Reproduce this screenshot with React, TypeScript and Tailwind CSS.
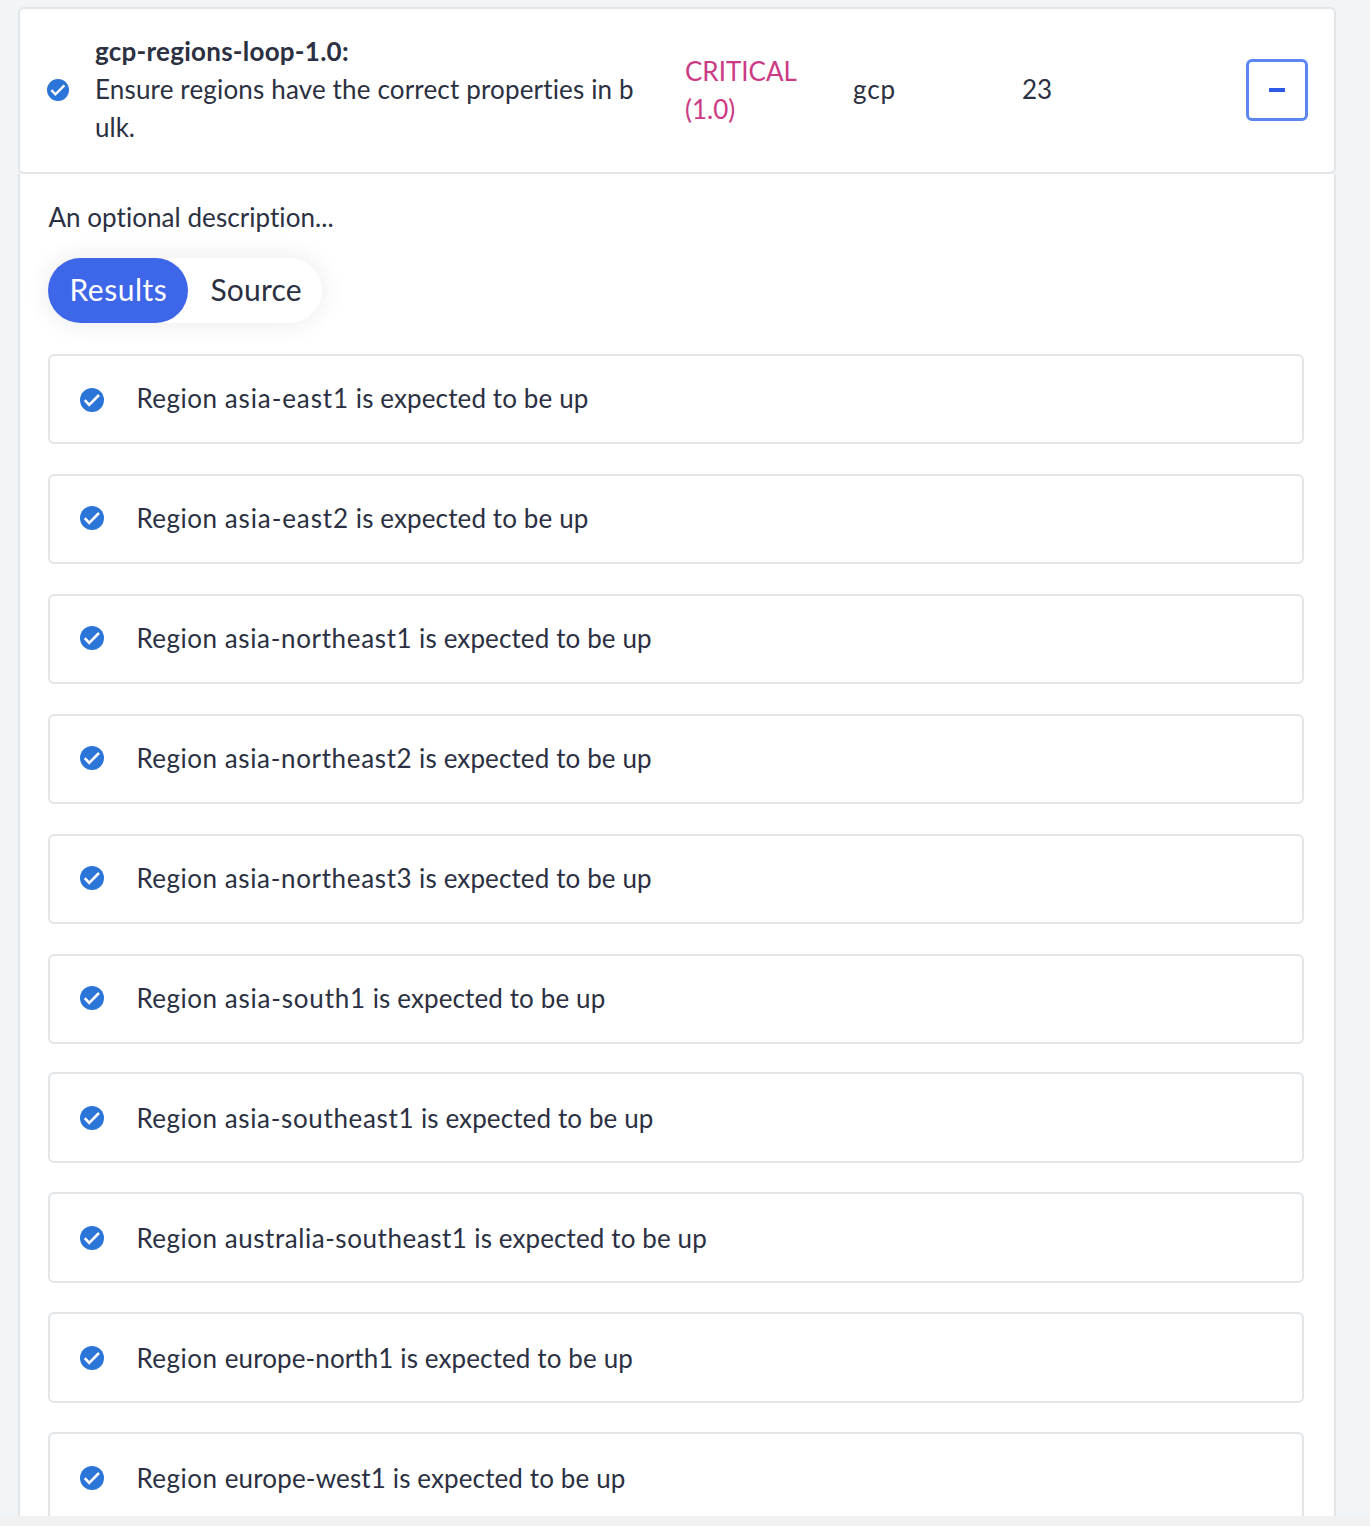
import React from "react";

const upper = { row: "h-[90px] mb-[30px]", icon: "mb-0.5", text: "mb-0.5" };
const lower = { row: "h-[91px] mb-[29px]", icon: "mt-px", text: "mt-px" };

const regions = [
  { name: "asia-east1", track: "tracking-[0.9px]", ...upper, icon: "mt-0.5" },
  { name: "asia-east2", track: "tracking-[0.9px]", ...upper },
  { name: "asia-northeast1", track: "tracking-[0.65px]", ...upper },
  { name: "asia-northeast2", track: "tracking-[0.65px]", ...upper },
  { name: "asia-northeast3", track: "tracking-[0.65px]", ...upper },
  { name: "asia-south1", track: "tracking-[0.8px]", ...upper, row: "h-[90px] mb-[28px]" },
  { name: "asia-southeast1", track: "tracking-[0.65px]", ...lower },
  { name: "australia-southeast1", track: "tracking-[0.55px]", ...lower },
  { name: "europe-north1", track: "tracking-[0.1px]", ...lower },
  { name: "europe-west1", track: "tracking-[0.15px]", ...lower },
];

function CheckBadge({ className }: { className: string }) {
  return (
    <svg viewBox="0 0 24 24" className={`shrink-0 ${className}`}>
      <circle cx="12" cy="12" r="12" fill="#2b74d8" />
      <path d="M4.8 12.2 9.2 16.8 19 7" fill="none" stroke="#fff" strokeWidth="2.6" />
    </svg>
  );
}

export default function App() {
  return (
    <div className="flex h-[1526px] w-[1370px] flex-col overflow-hidden bg-[#f1f5f8] font-['Lato',sans-serif] text-[26px] leading-[38px] text-[#2b3042] [font-variant-ligatures:none]">
      <div className="flex h-[1516px] shrink-0 flex-col overflow-hidden pt-[6.5px] pr-[34px] pl-[18px]">
        <header className="flex h-[167px] shrink-0 items-center rounded-[6px] border-2 border-[#e2e6e9] bg-white pr-[26px] pl-[26.5px]">
          <CheckBadge className="mb-px size-[22px]" />
          <div className="mb-0.5 ml-[26.5px] w-[590px] shrink-0 whitespace-nowrap">
            <div className="font-bold tracking-[0.25px]">gcp-regions-loop-1.0:</div>
            <div className="tracking-[0.16px]">Ensure regions have the correct properties in b</div>
            <div>ulk.</div>
          </div>
          <div className="mb-px w-[168px] shrink-0 text-[#cc3a85]">
            <div>CRITICAL</div>
            <div>(1.0)</div>
          </div>
          <div className="mb-0.5 w-[169px] shrink-0 tracking-[0.9px]">gcp</div>
          <div className="mb-0.5 grow">23</div>
          <button className="mb-px flex size-[62px] items-center justify-center rounded-[6px] border-[3px] border-[#5c86f2] bg-white">
            <span className="h-1 w-4 bg-[#2f5be8]" />
          </button>
        </header>
        <main className="flex h-[1400px] shrink-0 flex-col items-start border-x-2 border-[#e2e6e9] bg-white pt-6 pr-[30px] pl-[28.4px]">
          <p className="tracking-[0.06px]">An optional description...</p>
          <div className="mt-[22px] flex h-[65px] shrink-0 items-center rounded-full bg-white text-[30px] shadow-[0_0_26px_rgba(0,0,0,0.09)]">
            <div className="flex h-full w-[140px] items-center justify-center rounded-full bg-[#3e66e9] pb-[3px] tracking-[0.5px] text-white">
              Results
            </div>
            <div className="w-[134px] pb-[3px] pl-[22px] tracking-[0.2px]">Source</div>
          </div>
          <ul className="mt-[31px] flex w-full flex-col">
            {regions.map((r) => (
              <li
                key={r.name}
                className={`flex shrink-0 items-center rounded-[6px] border-2 border-[#e2e6e9] pl-[30px] ${r.row}`}
              >
                <CheckBadge className={`size-6 ${r.icon}`} />
                <span className={`ml-8 whitespace-nowrap tracking-[0.12px] ${r.text}`}>
                  <span className="tracking-[0.5px]">Region </span>
                  <span className={r.track}>{r.name}</span> is expected to be up
                </span>
              </li>
            ))}
          </ul>
        </main>
      </div>
      <div className="h-[10px] shrink-0 bg-[#f1f1f2]" />
    </div>
  );
}
